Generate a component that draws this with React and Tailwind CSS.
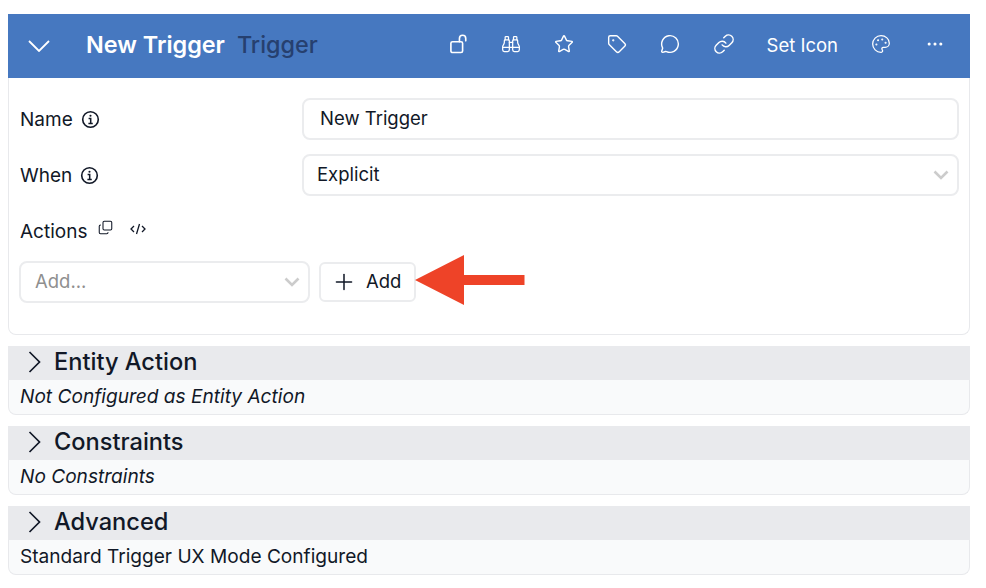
import React from "react";
import { Binoculars, Star, Tag, MessageCircle, Link, Palette, Ellipsis, Plus, Copy } from "lucide-react";

const font = { fontFamily: "Inter, sans-serif" };

function InfoIcon() {
  return (
    <svg viewBox="0 0 20 20" className="w-[19px] h-[19px] text-[#111827]" fill="none" stroke="currentColor">
      <circle cx="10" cy="10" r="8.2" strokeWidth="1.7" />
      <path d="M8 9h2.200v5M7.800 14.200h4.600" strokeWidth="1.6" />
      <circle cx="10" cy="6" r="1.100" fill="currentColor" stroke="none" />
    </svg>
  );
}

function Caret() {
  return (
    <svg viewBox="0 0 16 10" className="w-[16px] h-[10px]" fill="none" stroke="#cccccc" strokeWidth="2.600">
      <path d="M1.500 1.500 8 8l6.500-6.500" />
    </svg>
  );
}

function OpenLock() {
  return (
    <svg viewBox="0 0 20 22" className="w-[18px] h-[20px]" fill="none" stroke="#ffffff" strokeWidth="1.800">
      <rect x="1" y="8.500" width="13" height="12" rx="1.800" />
      <path d="M10.500 8.500V4.800a3.500 3.500 0 0 1 7 0v2.700" strokeLinecap="round" />
    </svg>
  );
}

function Section({ title, text, italic }) {
  return (
    <section className="mt-[11px] rounded-b-lg border-b border-x border-[#e8e9ec] bg-[#f9fafb]">
      <div className="h-[34px] bg-[#e9eaed] flex items-center -mx-px pb-[2px]">
        <svg viewBox="0 0 13 22" className="ml-[20px] w-[13px] h-[22px]" fill="none" stroke="#111827" strokeWidth="1.700">
          <path d="M1.500 1 11.500 11l-10 10" />
        </svg>
        <span className="ml-[13px] text-[23.600px] leading-[32px] font-medium text-[#111827]">{title}</span>
      </div>
      <div className={`h-[34px] pl-[11px] pb-[2px] flex items-center text-[19.100px] text-[#111827] ${italic ? "italic" : ""}`}>{text}</div>
    </section>
  );
}

export default function App() {
  const icon = "w-5 h-5 text-white";
  const line = "border-2 border-[#ebecee]";
  return (
    <div className="relative w-[986px] h-[588px] bg-white overflow-hidden pt-[14px] pl-2" style={font}>
      <div className="w-[962px]">
        <header className="h-[64px] bg-[#4678c0] flex items-center">
          <svg viewBox="0 0 22 12" className="ml-[20px] w-[22px] h-[12px]" fill="none" stroke="#ffffff" strokeWidth="1.800">
            <path d="M1 1 11 11 21 1" />
          </svg>
          <h1 className="ml-[36px] text-[23.400px] font-semibold text-white leading-[32px] pb-[2px]">New Trigger</h1>
          <span className="ml-[12px] text-[23.400px] font-medium text-[#26406f] leading-[32px] pb-[2px]">Trigger</span>
          <div className="ml-auto flex items-center h-full pr-[25px] pb-[4px]">
            <div className="flex items-center gap-[33px]">
              <OpenLock />
              <Binoculars className={icon} strokeWidth={1.5} />
              <Star className={icon} strokeWidth={1.7} />
              <Tag className={icon} strokeWidth={1.7} />
              <MessageCircle className={icon} strokeWidth={1.7} />
              <Link className="w-[22px] h-[22px] text-white" strokeWidth={1.6} />
            </div>
            <span className="ml-[32px] text-[18.500px] text-white pt-[3px]">Set Icon</span>
            <Palette className={`${icon} ml-[33px]`} strokeWidth={1.5} />
            <Ellipsis className={`${icon} ml-[34px]`} strokeWidth={1.7} />
          </div>
        </header>

        <div className="h-[257px] border-x border-b border-[#e8e9ec] rounded-b-lg pt-5 pl-[11px] pr-[10px] text-[#111827] text-[19px]">
          <div className="flex items-center h-[42px]">
            <div className="w-[282px] flex items-center gap-[8px]">
              <span className="pt-[2px]">Name</span>
              <InfoIcon />
            </div>
            <div className={`flex-1 h-[42px] rounded-lg ${line} flex items-center pl-4 text-[18.500px]`}>New Trigger</div>
          </div>
          <div className="flex items-center h-[42px] mt-[14px]">
            <div className="w-[282px] flex items-center gap-[8px]">
              <span className="pt-[2px]">When</span>
              <InfoIcon />
            </div>
            <div className={`flex-1 h-[42px] rounded-lg ${line} flex items-center justify-between pl-[13px] pr-[8px]`}>
              <span className="text-[18.500px]">Explicit</span>
              <Caret />
            </div>
          </div>
          <div className="flex items-start mt-[22px] h-[26px]">
            <span>Actions</span>
            <Copy className="ml-[11px] mt-[2px] w-[15px] h-[15px] -scale-y-100" strokeWidth={1.7} />
            <svg viewBox="0 0 16 12" className="ml-[17px] mt-[5px] w-[16px] h-[12px]" fill="none" stroke="#111827" strokeWidth="1.300">
              <path d="M4 3 1 6l3 3M12 3l3 3-3 3M9.500 1 6.500 11" />
            </svg>
          </div>
          <div className="flex items-center mt-[17px] -ml-px">
            <div className={`w-[291px] h-[42px] rounded-lg ${line} flex items-center justify-between pl-[14px] pr-[8px]`}>
              <span className="text-[#8f8f8f] text-[18.500px]">Add...</span>
              <Caret />
            </div>
            <button className={`ml-[9px] w-[97px] h-[40px] rounded-md ${line} flex items-center pl-[10px] gap-[9px] text-[18.500px] bg-white`}>
              <Plus className="w-[26px] h-[26px]" strokeWidth={1.4} />
              Add
            </button>
          </div>
        </div>

        <Section title="Entity Action" text="Not Configured as Entity Action" italic />
        <Section title="Constraints" text="No Constraints" italic />
        <Section title="Advanced" text="Standard Trigger UX Mode Configured" />
      </div>

      <svg className="absolute left-[414px] top-[254px] w-[112px] h-[52px]" viewBox="0 0 112 52">
        <path d="M1 26 50 1v20h60.500v10H50v20z" fill="#ee4328" />
      </svg>
    </div>
  );
}
